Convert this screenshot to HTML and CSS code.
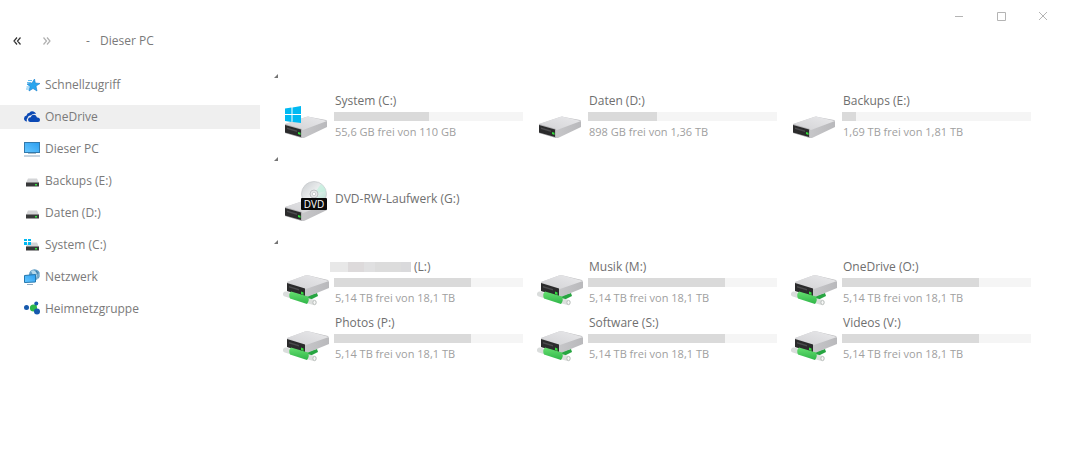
FILE: index.html
```html
<!DOCTYPE html>
<html lang="de">
<head>
<meta charset="utf-8">
<meta name="viewport" content="width=device-width, initial-scale=1">
<title>Dieser PC</title>
<link rel="stylesheet" href="styles.css">
</head>
<body>
<svg class="defs" aria-hidden="true">
  <defs>
    <linearGradient id="top" x1="0" y1="1" x2="1" y2="0"><stop offset="0" stop-color="#d2d2d5"/><stop offset="1" stop-color="#e9e9eb"/></linearGradient>
    <linearGradient id="side" x1="0" y1="0" x2="1" y2="0"><stop offset="0" stop-color="#d0d0d2"/><stop offset="1" stop-color="#b9b9bc"/></linearGradient>
    <linearGradient id="screen" x1="0" y1="1" x2="1" y2="0"><stop offset="0" stop-color="#67c8ff"/><stop offset="1" stop-color="#2a9df0"/></linearGradient>
    <linearGradient id="disc" x1="0" y1="0" x2="1" y2="1"><stop offset="0" stop-color="#c9cccf"/><stop offset=".5" stop-color="#eef0f1"/><stop offset=".7" stop-color="#cbe9df"/><stop offset="1" stop-color="#c5c8cb"/></linearGradient>
    <linearGradient id="pipe" x1="0" y1="0" x2="0" y2="1"><stop offset="0" stop-color="#66e070"/><stop offset="1" stop-color="#2fb548"/></linearGradient>
    <symbol id="drive" viewBox="0 0 54 56">
      <path d="M5 36 26 29Q28 28 30 29L46 32Q47 32 47 34V39L24 50H22L5 45Z" fill="url(#side)"/>
      <path d="M5 36 26 29Q28 28 30 29L47 33 23 42Z" fill="url(#top)"/>
      <path d="M5 36 22 41V50L5 45Z" fill="#b4b4b6"/>
      <path d="M5 37 21 41.500V49L5 44.500Z" fill="#2b2b2c"/>
      <path d="M7 39.500 17 42.500V44L7 41Z" fill="#4b4b4d"/>
      <path d="M18 44 20.500 44.800V47L18 46Z" fill="#33dd3d"/>
    </symbol>
    <symbol id="windrive" viewBox="0 0 54 56">
      <use href="#drive"/>
      <path d="M5 20.500 11.500 19.500V26H5ZM12.500 19.400 21 18V26H12.500ZM5 27H11.500V34L5 33ZM12.500 27H21V35L12.500 34Z" fill="#00b9f2"/>
    </symbol>
    <symbol id="netdrive" viewBox="0 0 54 56">
      <path d="M26 42 37 39 38 42 30 46Z" fill="#27a541"/>
      <path d="M5.500 40 12 42" stroke="#dadddc" stroke-width="5" stroke-linecap="round"/>
      <path d="M7 28 25 21.500Q27 21 29 21.500L48 26 49 28V34L27 43H25L7 37Z" fill="url(#side)"/>
      <path d="M7 28 25 21.500Q27 21 29 21.500L49 27 26 35Z" fill="url(#top)"/>
      <path d="M7 29 25 34.500V42.500L7 37Z" fill="#2b2b2c"/>
      <path d="M9 32 19 35V36.500L9 33.500Z" fill="#4b4b4d"/>
      <path d="M21 37.500 23.500 38.500V41L21 40Z" fill="#33dd3d"/>
      <path d="M27 46.500 34 48.500" stroke="#dcdfdd" stroke-width="5" stroke-linecap="round"/>
      <ellipse cx="34.500" cy="48.500" rx="1.600" ry="2.200" fill="#f5f6f5" stroke="#b0b5b2" stroke-width=".8"/>
      <path d="M11 37.500Q8 40 10 44.500L27 50Q30 46 28 42.500Z" fill="url(#pipe)"/>
    </symbol>
    <symbol id="dvd" viewBox="0 0 54 56">
      <use href="#drive"/>
      <circle cx="34" cy="23" r="12.500" fill="url(#disc)" stroke="#c3c6c8" stroke-width=".7"/>
      <path d="M34 23 41 13Q45 16 46 20Z" fill="#bff0dc" opacity=".7"/>
      <circle cx="34" cy="23" r="4" fill="#e5e7e8" stroke="#b5b8ba" stroke-width=".8"/>
      <circle cx="34" cy="23" r="1.700" fill="#fff" stroke="#b5b8ba" stroke-width=".6"/>
      <rect x="21" y="27" width="26" height="12" rx="1" fill="#0b0b0b"/>
      <text x="34" y="36.500" text-anchor="middle" class="badge-text">DVD</text>
    </symbol>
    <symbol id="small-drive" viewBox="0 0 16 16">
      <path d="M4 5.500H13L15 10H2Z" fill="#d4d5d7"/>
      <rect x="2" y="9.500" width="13" height="4" fill="#38393a"/>
      <rect x="11" y="11" width="2" height="1.500" fill="#34e040"/>
    </symbol>
  </defs>
</svg>

<div class="window">
  <header class="titlebar">
    <button class="win-btn" aria-label="Minimieren"><svg width="10" height="10" viewBox="0 0 10 10"><path d="M1 5.500H9"/></svg></button>
    <button class="win-btn" aria-label="Maximieren"><svg width="10" height="10" viewBox="0 0 10 10"><path d="M1.500 1.500H9.500V9.500H1.500Z"/></svg></button>
    <button class="win-btn" aria-label="Schließen"><svg width="10" height="10" viewBox="0 0 10 10"><path d="M1 1 9 9M9 1 1 9"/></svg></button>
  </header>

  <nav class="toolbar" aria-label="Navigation">
    <button class="nav-btn" aria-label="Zurück"><svg width="8" height="8" viewBox="0 0 8 8"><path d="M4 .5 1 4 4 7.500M7.500 .5 4.500 4 7.500 7.500"/></svg></button>
    <button class="nav-btn nav-off" aria-label="Vorwärts"><svg width="8" height="8" viewBox="0 0 8 8"><path d="M.5 .5 3.500 4 .5 7.500M4 .5 7 4 4 7.500"/></svg></button>
    <span class="dash">-</span>
    <span>Dieser PC</span>
  </nav>

  <div class="body">
    <nav class="sidebar" aria-label="Orte">
      <a class="place" href="#"><svg class="place-icon" viewBox="0 0 16 16"><path d="M10.500 2 11.300 6 16 6.500 12 9 13 14 9 11.500 5 14 6 9.500 3 7 8 6Z" fill="#27a5ee" stroke="#1480cf" stroke-width=".6"/><path d="M4 3.500H8M3 5.500H7M2.500 10H5M2 12H5" stroke="#62bdf0"/></svg>Schnellzugriff</a>
      <a class="place active" href="#"><svg class="place-icon" viewBox="0 0 16 16"><path d="M3 12.500Q0 12 0 9.500 0 7 2.500 6.500 3 4 5.500 3.700 7 1.800 9.500 2.600 11.500 3.200 12 5 9 4 7 6.300 4 6.500 3.500 9Q2 10.500 3 12.500Z" fill="#0b49b5"/><path d="M6 13Q4 12.500 4 10.500 4.200 8.300 6.700 8.200 7.500 5.700 10 5.800 12.300 6 13 8.500 16 8.300 16 11 16 13 14 13Z" fill="#0b49b5"/></svg>OneDrive</a>
      <a class="place" href="#"><svg class="place-icon" viewBox="0 0 16 16"><rect x=".5" y="1.500" width="15" height="10" fill="url(#screen)" stroke="#3279ac"/><path d="M4 12.500H12" stroke="#a9bcc8"/><path d="M0 15H16" stroke="#8fa9c0"/></svg>Dieser PC</a>
      <a class="place" href="#"><svg class="place-icon"><use href="#small-drive"/></svg>Backups (E:)</a>
      <a class="place" href="#"><svg class="place-icon"><use href="#small-drive"/></svg>Daten (D:)</a>
      <a class="place" href="#"><svg class="place-icon" viewBox="0 0 16 16"><use href="#small-drive"/><path d="M0 2H3V4H0ZM4 2H7V4H4ZM0 5H3V8H0ZM4 5H7V8H4Z" fill="#00b9f2"/></svg>System (C:)</a>
      <a class="place" href="#"><svg class="place-icon" viewBox="0 0 16 16"><circle cx="10.500" cy="5.700" r="5.500" fill="#5f9dc6"/><path d="M7 2Q10 0 12 3T9 6ZM12 6 15.500 4Q16.500 8 13 10Z" fill="#b5d8ea"/><path d="M12 2Q15 4 14 9" stroke="#3978a4" fill="none"/><path d="M.5 6.500 11.500 5.500V13L.5 13.500Z" fill="url(#screen)" stroke="#2477ae"/><path d="M3 15.500H9" stroke="#8fa9c0"/></svg>Netzwerk</a>
      <a class="place" href="#"><svg class="place-icon" viewBox="0 0 16 16"><path d="M10 7 12.500 2.500M10 7 13.500 11" stroke="#28a745" stroke-width="2"/><circle cx="2.500" cy="6.500" r="2.500" fill="#1659ad"/><circle cx="9.500" cy="7" r="3.600" fill="#2db84a"/><circle cx="12.300" cy="2.500" r="2" fill="#1659ad"/><circle cx="13" cy="10.500" r="3" fill="#1659ad"/></svg>Heimnetzgruppe</a>
    </nav>

    <main class="content">
      <section class="group">
        <button class="toggle" aria-label="Geräte und Laufwerke"><svg width="5" height="5" viewBox="0 0 5 5"><path d="M4 1V5H0Z"/></svg></button>
        <div class="tiles">
          <article class="tile"><svg class="tile-icon"><use href="#windrive"/></svg><div class="info"><h3 class="name">System (C:)</h3><div class="bar"><div class="fill" style="width:50%"></div></div><p class="free">55,6 GB frei von 110 GB</p></div></article>
          <article class="tile"><svg class="tile-icon"><use href="#drive"/></svg><div class="info"><h3 class="name">Daten (D:)</h3><div class="bar"><div class="fill" style="width:36.5%"></div></div><p class="free">898 GB frei von 1,36 TB</p></div></article>
          <article class="tile"><svg class="tile-icon"><use href="#drive"/></svg><div class="info"><h3 class="name">Backups (E:)</h3><div class="bar"><div class="fill" style="width:7.4%"></div></div><p class="free">1,69 TB frei von 1,81 TB</p></div></article>
        </div>
      </section>
      <section class="group">
        <button class="toggle" aria-label="Optische Laufwerke"><svg width="5" height="5" viewBox="0 0 5 5"><path d="M4 1V5H0Z"/></svg></button>
        <div class="tiles">
          <article class="tile"><svg class="tile-icon"><use href="#dvd"/></svg><div class="info"><h3 class="name">DVD-RW-Laufwerk (G:)</h3></div></article>
        </div>
      </section>
      <section class="group">
        <button class="toggle" aria-label="Netzwerkadressen"><svg width="5" height="5" viewBox="0 0 5 5"><path d="M4 1V5H0Z"/></svg></button>
        <div class="tiles">
          <article class="tile"><svg class="tile-icon"><use href="#netdrive"/></svg><div class="info"><h3 class="name masked"><span class="mask"></span>(L:)</h3><div class="bar"><div class="fill" style="width:72.5%"></div></div><p class="free">5,14 TB frei von 18,1 TB</p></div></article>
          <article class="tile"><svg class="tile-icon"><use href="#netdrive"/></svg><div class="info"><h3 class="name">Musik (M:)</h3><div class="bar"><div class="fill" style="width:72.5%"></div></div><p class="free">5,14 TB frei von 18,1 TB</p></div></article>
          <article class="tile"><svg class="tile-icon"><use href="#netdrive"/></svg><div class="info"><h3 class="name">OneDrive (O:)</h3><div class="bar"><div class="fill" style="width:72.5%"></div></div><p class="free">5,14 TB frei von 18,1 TB</p></div></article>
          <article class="tile"><svg class="tile-icon"><use href="#netdrive"/></svg><div class="info"><h3 class="name">Photos (P:)</h3><div class="bar"><div class="fill" style="width:72.5%"></div></div><p class="free">5,14 TB frei von 18,1 TB</p></div></article>
          <article class="tile"><svg class="tile-icon"><use href="#netdrive"/></svg><div class="info"><h3 class="name">Software (S:)</h3><div class="bar"><div class="fill" style="width:72.5%"></div></div><p class="free">5,14 TB frei von 18,1 TB</p></div></article>
          <article class="tile"><svg class="tile-icon"><use href="#netdrive"/></svg><div class="info"><h3 class="name">Videos (V:)</h3><div class="bar"><div class="fill" style="width:72.5%"></div></div><p class="free">5,14 TB frei von 18,1 TB</p></div></article>
        </div>
      </section>
    </main>
  </div>
</div>
</body>
</html>
```

FILE: styles.css
```css
* { box-sizing: border-box; }

body {
  margin: 0;
  background: #fff;
  color: #7a7a7a;
  font: 12px/16px "Open Sans", "Noto Sans", sans-serif;
}

button {
  display: flex;
  align-items: center;
  justify-content: center;
  padding: 0;
  border: 0;
  background: none;
}

.defs { position: absolute; width: 0; height: 0; }
.badge-text { font: 10px "Open Sans", sans-serif; fill: #fff; }

.titlebar {
  display: flex;
  justify-content: flex-end;
  height: 32px;
  padding-right: 1px;
}
.win-btn { width: 42px; height: 32px; }
.win-btn svg { fill: none; stroke: #b4b4b4; }

.toolbar {
  display: flex;
  align-items: center;
  height: 18px;
  padding-left: 8px;
}
.nav-btn { width: 18px; height: 18px; margin-right: 12px; }
.nav-btn svg { fill: none; stroke: #333; stroke-width: 1.2; }
.nav-off svg { stroke: #b0b0b0; }
.dash { width: 14px; margin-left: 18px; }

.body { display: flex; padding-top: 23px; }

.sidebar {
  display: flex;
  flex: 0 0 260px;
  flex-direction: column;
  gap: 8px;
}
.place {
  display: flex;
  align-items: center;
  gap: 5px;
  height: 24px;
  padding-left: 24px;
  color: inherit;
  text-decoration: none;
}
.place.active { background: #efefef; }
.place-icon { width: 16px; height: 16px; }

.content { flex: 1; padding-right: 23px; }
.group { padding-bottom: 12px; }
.toggle { height: 5px; margin: 0 0 10px 14px; }
.toggle svg { fill: #757575; }

.tiles {
  display: grid;
  grid-template-columns: repeat(3, 1fr);
  padding-left: 20px;
}
.tile {
  display: flex;
  align-items: center;
  min-height: 56px;
  padding-right: 11px;
}
.tile-icon { flex: none; width: 54px; height: 56px; }
.info { flex: 1; }
.name, .free { margin: 0; padding-left: 1px; font-weight: 400; }
.name { color: #6f6f6f; font-size: 12px; }
.free { color: #a0a0a0; font-size: 11px; }
.bar { height: 9px; margin: 3px 0; background: #f5f5f5; }
.fill { height: 100%; background: #dadada; }

.masked { display: flex; align-items: center; gap: 3px; margin-left: -5px; }
.mask {
  width: 81px;
  height: 10px;
  background: linear-gradient(90deg, #e8e8e8 22%, #dddadb 22% 42%, #e0e0e1 42% 56%, #dcdcdc 56% 88%, #dadadc 88%);
}
```
